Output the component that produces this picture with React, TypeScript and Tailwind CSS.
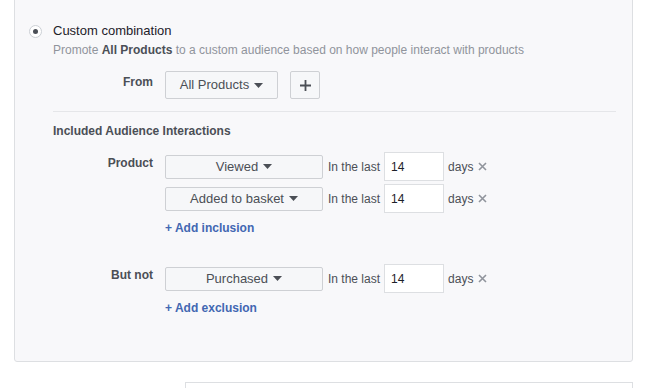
import { useState } from "react";

function Caret() {
  return (
    <svg width="9" height="5" viewBox="0 0 9 5" className="ml-[5px] inline-block">
      <path d="M0 0h9L4.5 5z" fill="#4b4f56" />
    </svg>
  );
}

function Dropdown({ label }: { label: string }) {
  return (
    <button className="flex h-[24px] w-[158px] items-center justify-center rounded-[2px] border border-[#ced0d4] bg-[#f6f7f9] text-[13px] text-[#4b4f56]">
      {label}
      <Caret />
    </button>
  );
}

function Remove() {
  return (
    <svg width="9" height="9" viewBox="0 0 9 9" className="ml-[5px]">
      <path d="M1 1l7 7M8 1L1 8" stroke="#90949c" strokeWidth="1.6" />
    </svg>
  );
}

function InteractionRow({ action }: { action: string }) {
  const [days, setDays] = useState("14");
  return (
    <div className="flex items-center">
      <Dropdown label={action} />
      <span className="ml-[5px] text-[12px] text-[#4b4f56]">In the last</span>
      <input
        value={days}
        onChange={(e) => setDays(e.target.value)}
        className="ml-[4px] h-[29px] w-[60px] border border-[#dddfe2] bg-white px-[6px] text-[12px] text-[#1d2129] outline-none"
      />
      <span className="ml-[4px] text-[12px] text-[#4b4f56]">days</span>
      <Remove />
    </div>
  );
}

function Label({ children }: { children: React.ReactNode }) {
  return (
    <div className="w-[100px] shrink-0 pt-[3px] text-right text-[12px] font-bold leading-[16px] text-[#4b4f56]">
      {children}
    </div>
  );
}

export default function App() {
  return (
    <div
      className="h-[388px] overflow-hidden bg-white pl-[14px] pr-[12px]"
      style={{ fontFamily: '"Liberation Sans", Arial, sans-serif' }}
    >
      <div className="-mt-px h-[363px] rounded-b-[3px] border border-[#dddfe2] bg-[#f8f8fa] pl-[14px] pr-[16px]">
        <div className="flex pt-[23px]">
          <div className="flex h-[16px] w-[24px] items-center">
            <span className="flex h-[13px] w-[13px] items-center justify-center rounded-full border border-[#ccd0d5] bg-white">
              <span className="h-[5px] w-[5px] rounded-full bg-[#4b4f56]" />
            </span>
          </div>
          <div className="flex-1">
            <div className="text-[13px] leading-[16px] text-[#1d2129]">Custom combination</div>
            <div className="mt-[3px] text-[12px] leading-[16px] text-[#90949c]">
              Promote <span className="font-bold text-[#4b4f56]">All Products</span> to a custom audience based on how people interact with products
            </div>

            <div className="mt-[13px] flex gap-[12px]">
              <Label>From</Label>
              <div className="flex gap-[12px]">
                <button className="flex h-[28px] w-[113px] items-center justify-center rounded-[2px] border border-[#ced0d4] bg-[#f6f7f9] text-[13px] text-[#4b4f56]">
                  All Products
                  <Caret />
                </button>
                <button className="flex h-[28px] w-[30px] items-center justify-center rounded-[2px] border border-[#ced0d4] bg-[#f6f7f9]">
                  <svg width="11" height="11" viewBox="0 0 11 11">
                    <path d="M5.5 0v11M0 5.5h11" stroke="#4b4f56" strokeWidth="1.8" />
                  </svg>
                </button>
              </div>
            </div>

            <div className="mt-[12px] border-t border-[#e5e6e9]" />

            <div className="mt-[11px] text-[12px] font-bold leading-[16px] text-[#4b4f56]">
              Included Audience Interactions
            </div>

            <div className="mt-[13px] flex gap-[12px]">
              <Label>Product</Label>
              <div className="flex flex-col gap-[3px]">
                <InteractionRow action="Viewed" />
                <InteractionRow action="Added to basket" />
                <a className="mt-[4px] text-[12px] font-bold leading-[16px] text-[#4267b2]" href="#">
                  + Add inclusion
                </a>
              </div>
            </div>

            <div className="mt-[28px] flex gap-[12px]">
              <Label>But not</Label>
              <div className="flex flex-col">
                <InteractionRow action="Purchased" />
                <a className="mt-[7px] text-[12px] font-bold leading-[16px] text-[#4267b2]" href="#">
                  + Add exclusion
                </a>
              </div>
            </div>
          </div>
        </div>
      </div>
      <div className="ml-[171px] mt-[20px] h-[30px] border border-[#dddfe2] bg-white" />
    </div>
  );
}
